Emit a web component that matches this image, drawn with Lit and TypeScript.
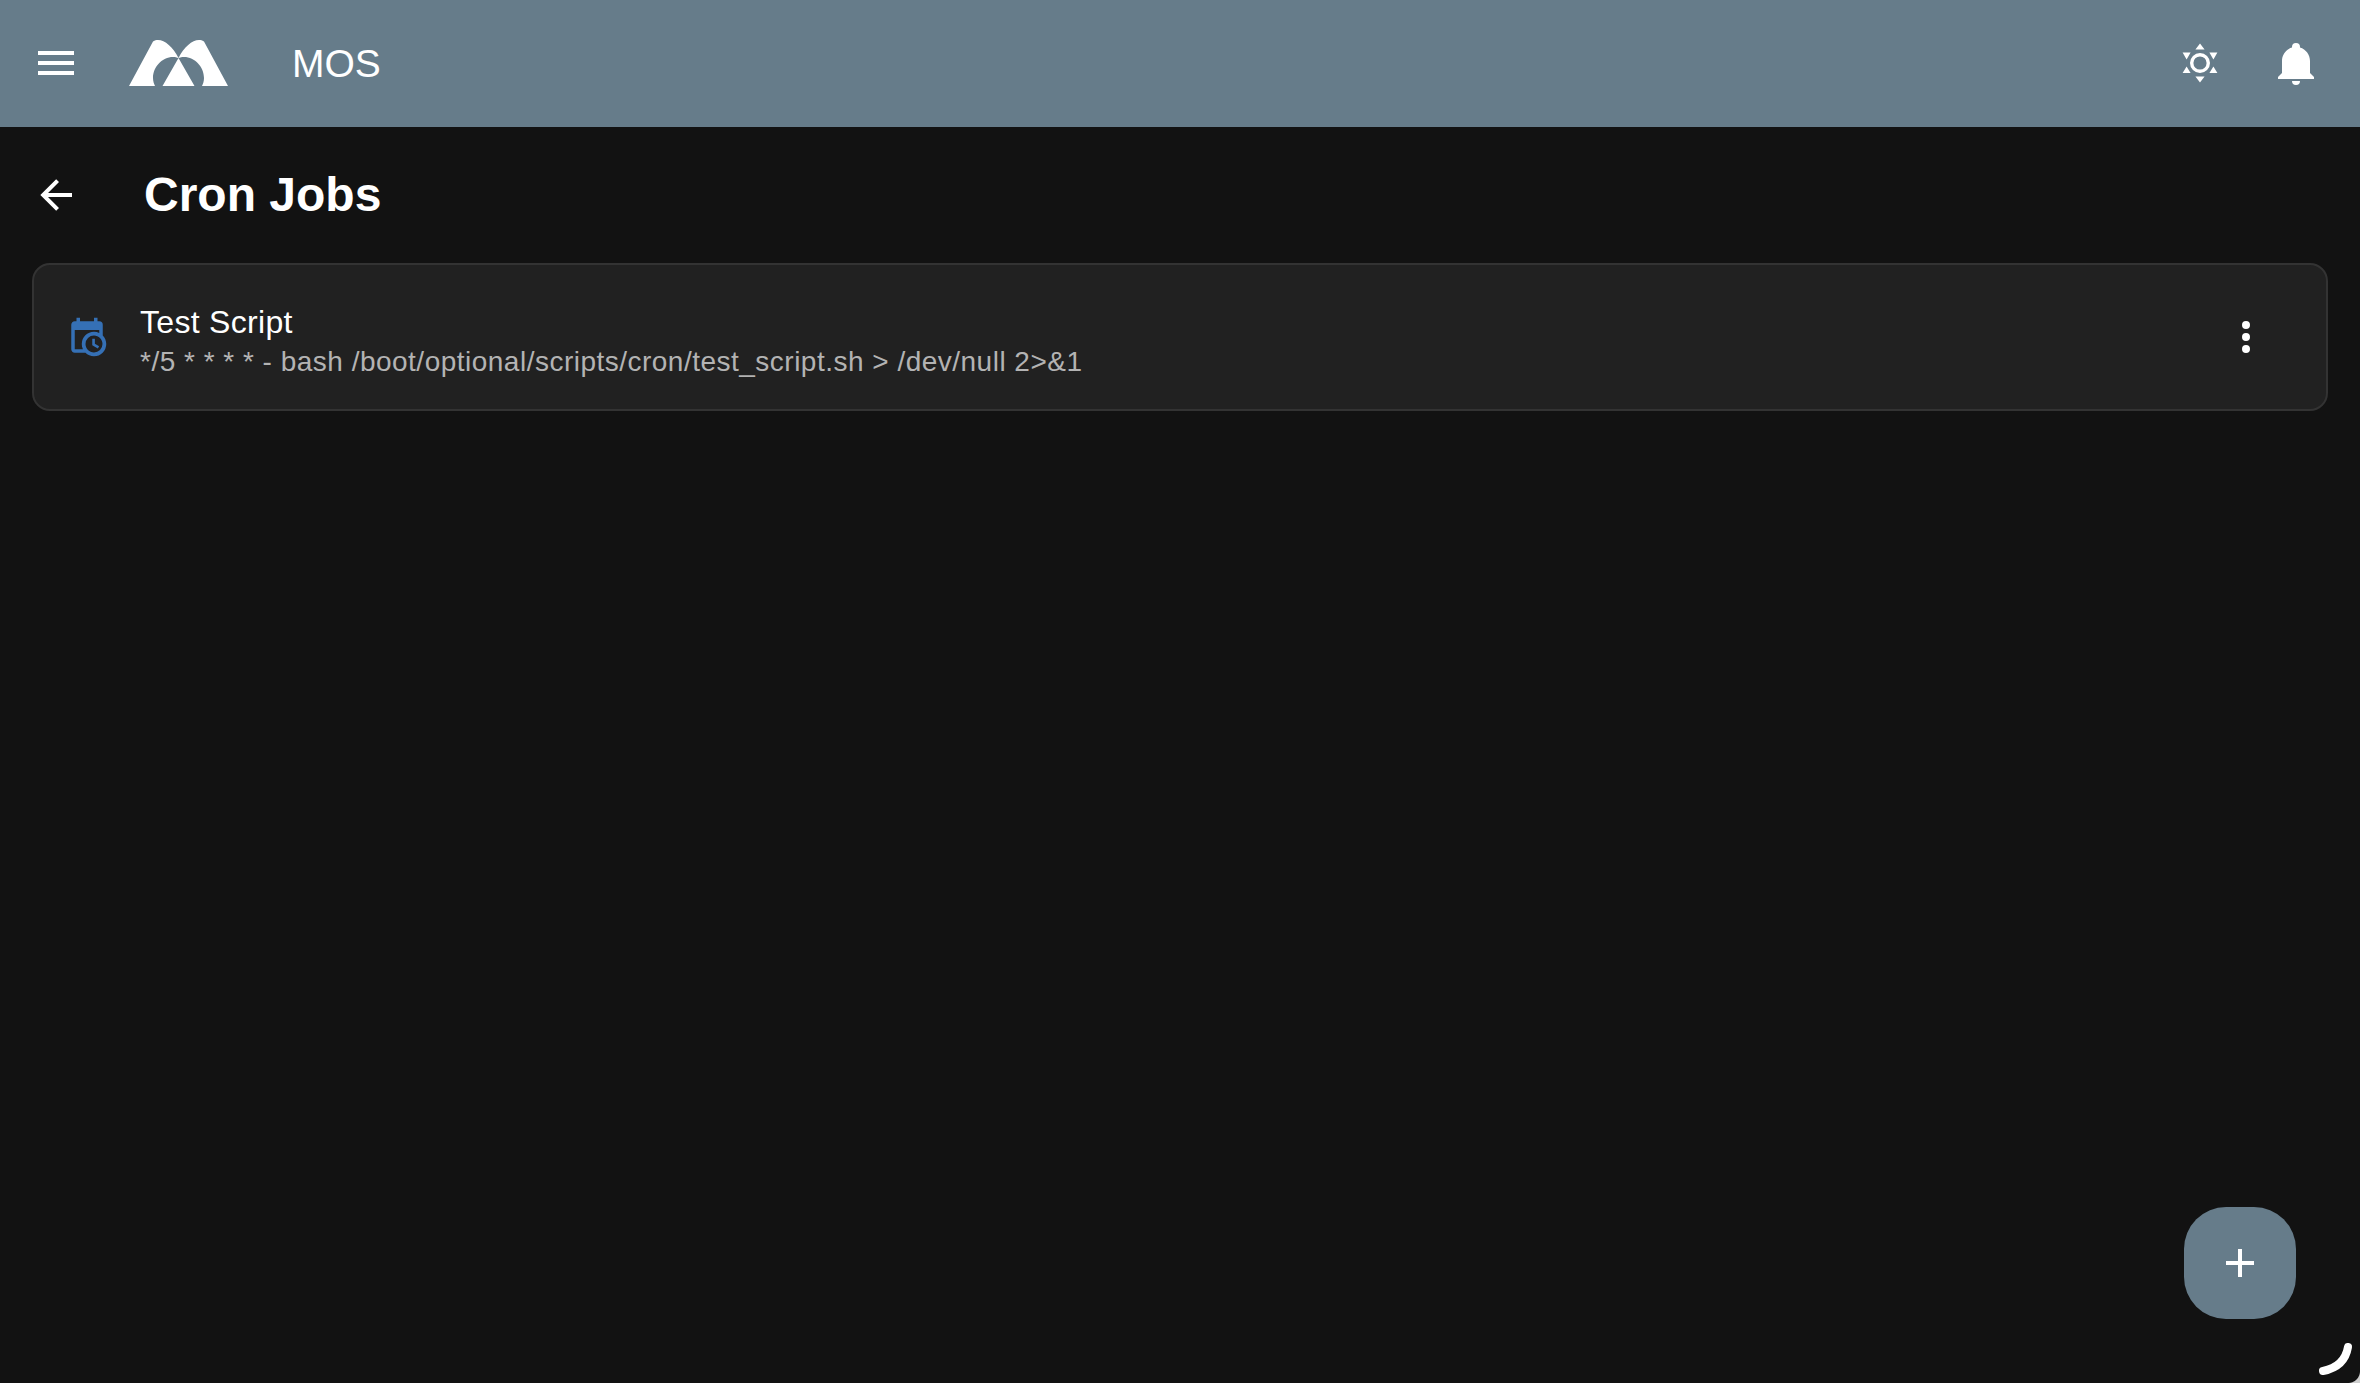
import { LitElement, html, css, svg } from "lit";
import { customElement } from "lit/decorators.js";

const P = {
  menu: "M3,6H21V8H3V6M3,11H21V13H3V11M3,16H21V18H3V16Z",
  bell: "M21,19V20H3V19L5,17V11C5,7.9 7.03,5.17 10,4.29C10,4.19 10,4.1 10,4A2,2 0 0,1 12,2A2,2 0 0,1 14,4C14,4.1 14,4.19 14,4.29C16.97,5.17 19,7.9 19,11V17L21,19M14,21A2,2 0 0,1 12,23A2,2 0 0,1 10,21",
  back: "M20,11V13H8L13.5,18.5L12.08,19.92L4.16,12L12.08,4.08L13.5,5.5L8,11H20Z",
  cal: "M15,13H16.5V15.82L18.94,17.23L18.19,18.53L15,16.69V13M19,8H5V19H9.67C9.24,18.09 9,17.07 9,16A7,7 0 0,1 16,9C17.07,9 18.09,9.24 19,9.67V8M5,21C3.89,21 3,20.1 3,19V5C3,3.89 3.89,3 5,3H6V1H8V3H16V1H18V3H19A2,2 0 0,1 21,5V11.1C22.24,12.36 23,14.09 23,16A7,7 0 0,1 16,23C14.09,23 12.36,22.24 11.1,21H5M16,11.15A4.85,4.85 0 0,0 11.15,16C11.15,18.68 13.32,20.85 16,20.85A4.85,4.85 0 0,0 20.85,16C20.85,13.32 18.68,11.15 16,11.15Z",
  dots: "M12,16A2,2 0 0,1 14,18A2,2 0 0,1 12,20A2,2 0 0,1 10,18A2,2 0 0,1 12,16M12,10A2,2 0 0,1 14,12A2,2 0 0,1 12,14A2,2 0 0,1 10,12A2,2 0 0,1 12,10M12,4A2,2 0 0,1 14,6A2,2 0 0,1 12,8A2,2 0 0,1 10,6A2,2 0 0,1 12,4Z",
  plus: "M19,13H13V19H11V13H5V11H11V5H13V11H19V13Z",
  sun: "M12,7A5,5 0 1,1 12,17A5,5 0 1,1 12,7M12,8.7A3.3,3.3 0 1,0 12,15.3A3.3,3.3 0 1,0 12,8.7M12,2.3L14.3,5.3H9.7ZM12,21.7L9.7,18.7H14.3ZM3.3,6.8H7.3L5.3,10.3ZM20.7,6.8L18.7,10.3L16.7,6.8ZM3.3,17L5.3,13.7L7.3,17ZM20.7,17H16.7L18.7,13.7Z",
};

const icon = (d: string, cls: string) =>
  html`<svg class=${cls} viewBox="0 0 24 24" aria-hidden="true"><path d=${d} fill="currentColor" fill-rule="evenodd"></path></svg>`;

const logo = svg`<path fill="#fff" d="M0,46 L24,1.5 C26,0 27,0 29,0 C36,0 44,7 49.5,18 C48,17.5 46,17 44,17 C33,17 24,27 24,38 C24,41 25,44 26,46 Z M99,46 L75,1.5 C73,0 72,0 70,0 C63,0 55,7 49.5,18 C51,17.5 53,17 55,17 C66,17 75,27 75,38 C75,41 74,44 73,46 Z M33.5,46 L49.5,18 L65.5,46 Z"></path>`;

@customElement("app-root")
export class AppRoot extends LitElement {
  static styles = css`
    :host {
      display: block;
      min-height: 100vh;
      background: #121212;
      color: #fff;
      font-family: "Liberation Sans", Arial, sans-serif;
    }
    svg { display: block; flex: none; }
    .i48 { width: 48px; height: 48px; }
    .bar {
      height: 127px;
      box-sizing: border-box;
      background: #667c8a;
      display: flex;
      align-items: center;
      padding: 0 40px 1px 32px;
    }
    .logo { width: 99px; height: 46px; margin-left: 49px; }
    .brand { font-size: 39px; margin-left: 64px; line-height: 1; }
    .spacer { flex: 1; }
    .theme { margin-right: 48px; width: 48px; height: 48px; }
    main { padding: 0 32px; }
    .head {
      display: flex;
      align-items: center;
      height: 136px;
    }
    .head h1 {
      margin: 0 0 0 64px;
      font-size: 48px;
      font-weight: 700;
      line-height: 1;
    }
    .card {
      height: 148px;
      box-sizing: border-box;
      background: #212121;
      border: 2px solid #333;
      border-radius: 18px;
      display: flex;
      align-items: center;
      padding: 0 56px 0 32px;
    }
    .cal { width: 42px; height: 42px; color: #3570b5; margin-right: 32px; }
    .text { flex: 1; padding-top: 8px; }
    .title { font-size: 32px; line-height: 40px; letter-spacing: 0.3px; }
    .sub { font-size: 28px; line-height: 36px; margin-top: 2px; letter-spacing: 0.49px; color: #b3b3b3; }
    .fab {
      position: fixed;
      left: 2184px;
      top: 1207px;
      width: 112px;
      height: 112px;
      border-radius: 42px;
      background: #667c8a;
      display: flex;
      align-items: center;
      justify-content: center;
      border: 0;
      padding: 0;
      color: #fff;
    }
    .swoosh { position: fixed; right: 0; bottom: 0; width: 48px; height: 48px; }
    .corner {
      position: fixed;
      right: 0;
      bottom: 0;
      width: 12px;
      height: 12px;
      background: radial-gradient(circle at 0 0, transparent 11.5px, #cfcfcf 12.5px);
    }
  `;

  render() {
    return html`
      <header class="bar">
        ${icon(P.menu, "i48")}
        <svg class="logo" viewBox="0 0 99 46">${logo}</svg>
        <span class="brand">MOS</span>
        <span class="spacer"></span>
        ${icon(P.sun, "theme")}
        ${icon(P.bell, "i48")}
      </header>
      <main>
        <div class="head">
          ${icon(P.back, "i48")}
          <h1>Cron Jobs</h1>
        </div>
        <section class="card">
          ${icon(P.cal, "cal")}
          <div class="text">
            <div class="title">Test Script</div>
            <div class="sub">*/5 * * * * - bash /boot/optional/scripts/cron/test_script.sh &gt; /dev/null 2&gt;&amp;1</div>
          </div>
          ${icon(P.dots, "i48")}
        </section>
      </main>
      <button class="fab">${icon(P.plus, "i48")}</button>
      <svg class="swoosh" viewBox="0 0 48 48"><path d="M36,12 C34,24 26,33 11,36" fill="none" stroke="#fff" stroke-width="8" stroke-linecap="round"></path></svg>
      <div class="corner"></div>
    `;
  }
}
